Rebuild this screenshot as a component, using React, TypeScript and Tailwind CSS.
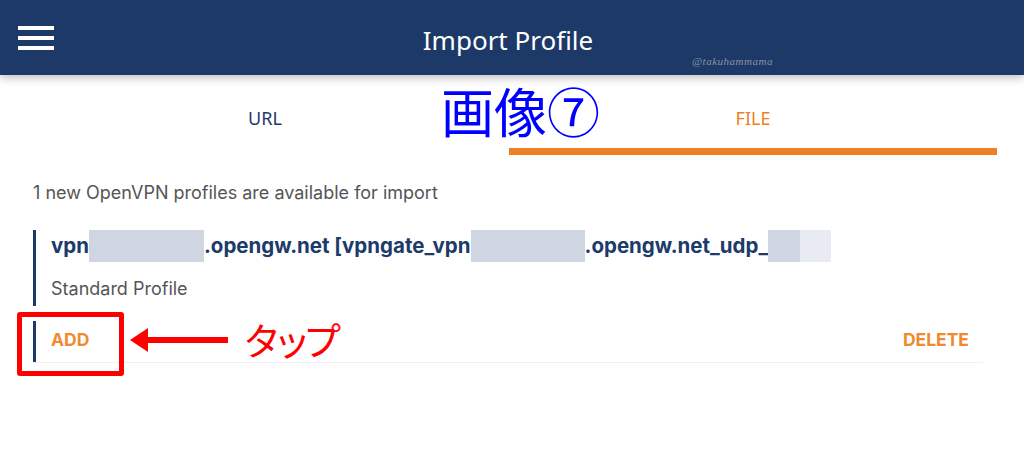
import { useState } from 'react'

const NAVY = 'text-[#1c3a6a]'

function Blur({ w, light }: { w: number; light?: number }) {
  return (
    <span className="inline-flex h-[32px] align-middle">
      <span className="h-full bg-[#cfd6e1]" style={{ width: w - (light ?? 0) }} />
      {light ? <span className="h-full bg-[#e8ebf1]" style={{ width: light }} /> : null}
    </span>
  )
}

export default function App() {
  const [tab, setTab] = useState<'url' | 'file'>('file')

  return (
    <div className="relative h-[457px] w-[1024px] overflow-hidden bg-white font-['Inter',sans-serif]">
      {/* header */}
      <header className="relative z-10 flex h-[75px] items-center bg-[#1c3968] shadow-[0_3px_8px_rgba(0,0,0,0.25)]">
        <button className="ml-[18px] flex h-[24px] w-[36px] flex-col justify-between">
          <span className="h-[4px] w-[36px] bg-white" />
          <span className="h-[4px] w-[36px] bg-white" />
          <span className="h-[4px] w-[36px] bg-white" />
        </button>
        <h1 className="absolute left-0 right-0 top-[22px] pr-[8px] text-center font-['Noto_Sans',sans-serif] text-[26px] leading-[36px] text-white">
          Import Profile
        </h1>
        <span className="absolute left-[692px] top-[53px] font-['Liberation_Serif',serif] text-[11px] italic tracking-[0.5px] text-[#8a93a3]">
          @takuhammama
        </span>
      </header>

      {/* tabs */}
      <div className="ml-[21px] flex h-[80px] w-[976px]">
        <button
          onClick={() => setTab('url')}
          className={`flex flex-1 flex-col justify-end font-['Noto_Sans',sans-serif] text-[18px] ${tab === 'url' ? 'text-[#ee7f22]' : NAVY}`}
        >
          <span className="mb-[16px]">URL</span>
          <span className={`h-[7px] w-full ${tab === 'url' ? 'bg-[#ee7f22]' : ''}`} />
        </button>
        <button
          onClick={() => setTab('file')}
          className={`flex flex-1 flex-col justify-end font-['Noto_Sans',sans-serif] text-[18px] ${tab === 'file' ? 'text-[#ee7f22]' : NAVY}`}
        >
          <span className="mb-[16px]">FILE</span>
          <span className={`h-[7px] w-full ${tab === 'file' ? 'bg-[#ee7f22]' : ''}`} />
        </button>
      </div>

      {/* content */}
      <div className="pl-[33px] pr-[41px] pt-[26px]">
        <p className="text-[18px] leading-[24px] text-[#555]">1 new OpenVPN profiles are available for import</p>

        <div className="mt-[25px] border-l-[3px] border-[#1c3968] pl-[15px]">
          <div className="flex h-[32px] items-center text-[20.5px] font-bold whitespace-nowrap text-[#1c3a6a]">
            <span>vpn</span>
            <Blur w={115} />
            <span>.opengw.net [vpngate_vpn</span>
            <Blur w={114} />
            <span>.opengw.net_udp_</span>
            <Blur w={63} light={31} />
          </div>
          <p className="mt-[15px] pb-[5px] text-[18px] leading-[24px] text-[#555]">Standard Profile</p>
        </div>

        <div className="mt-[15px] flex items-center border-b border-[#f0f0f0]">
          <div className="flex h-[41px] items-center border-l-[3px] border-[#1c3968] pl-[15px]">
            <button className="-mt-[3px] text-[17.5px] font-bold text-[#ef8a2f]">ADD</button>
          </div>
          <button className="-mt-[3px] ml-auto mr-[14px] text-[17.5px] font-bold text-[#ef8a2f]">DELETE</button>
        </div>
      </div>

      {/* annotations */}
      <span className="absolute left-[441px] top-[77px] font-['Noto_Sans_CJK_JP',sans-serif] text-[53px] leading-[66px] text-[#0000ff]">
        画像⑦
      </span>
      <div className="absolute left-[17px] top-[312px] h-[64px] w-[107px] rounded-[3px] border-[5px] border-[#ff0000]" />
      <svg className="absolute left-[128px] top-[328px]" width="102" height="26" viewBox="0 0 102 26">
        <polygon points="2,12 20,0 20,24" fill="#ff0000" />
        <rect x="18" y="9" width="82" height="6" fill="#ff0000" />
      </svg>
      <span className="absolute left-[243px] top-[313px] font-['Noto_Sans_CJK_JP',sans-serif] text-[38px] leading-[52px] tracking-[-8px] text-[#ff0000]">
        タップ
      </span>
    </div>
  )
}
